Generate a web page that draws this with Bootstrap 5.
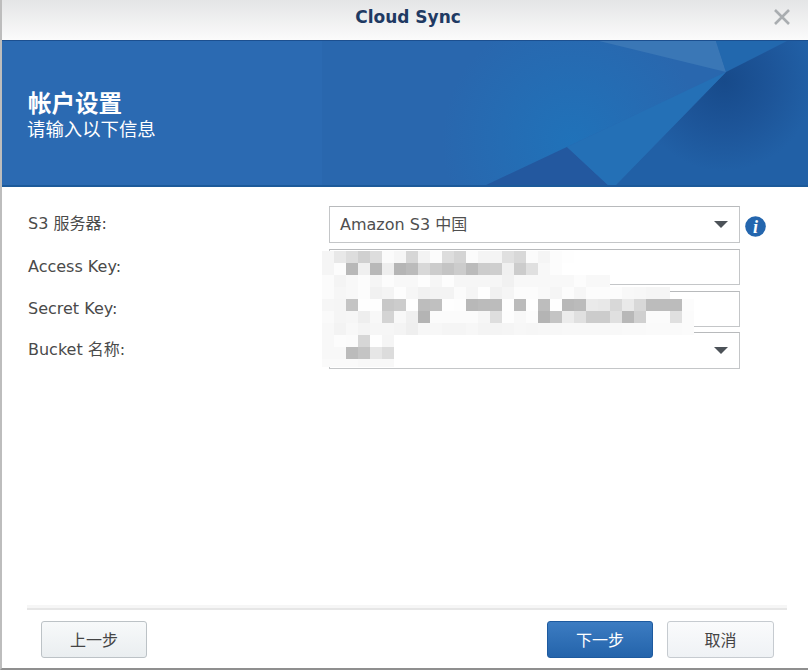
<!DOCTYPE html>
<html lang="zh-CN">
<head>
<meta charset="utf-8">
<title>Cloud Sync</title>
<link href="https://cdn.jsdelivr.net/npm/bootstrap@5.3.0/dist/css/bootstrap.min.css" rel="stylesheet">
<style>
html,body{height:100%;margin:0;background:#fff;overflow:hidden}
body{font-family:"Liberation Sans","Noto Sans CJK SC",sans-serif}
.wnd{width:808px;height:670px;border-left:2px solid #bdbdbd;border-bottom:2px solid #8f8f8f;display:flex;flex-direction:column;box-sizing:border-box;position:relative}
.ttl{height:40px;flex:none;background:linear-gradient(#e4e5e6,#fbfbfb);position:relative}
.ttl-text{font-family:"DejaVu Sans","Liberation Sans",sans-serif;font-weight:700;font-size:17px;color:#1f3a63;line-height:34px;text-align:center;padding-left:6px}
.cls{position:absolute;left:771px;top:9px}
.hero{height:147px;flex:none;position:relative;color:#fff;padding:50px 0 0 26px;background:#2b6ab2;border-top:1px solid #1c4f8f;overflow:hidden}
.hero svg{position:absolute;left:0;top:0}
.hero-in{position:relative}
.hero-a{font-family:"Liberation Sans","Noto Sans CJK SC",sans-serif;font-weight:700;font-size:23.5px;line-height:27px}
.hero-b{font-family:"Liberation Sans","Noto Sans CJK SC",sans-serif;font-size:18.4px;line-height:24px;margin-left:-1px}
.frm{flex:1;padding:19px 0 0 26px;color:#444}
.frow{display:flex;align-items:flex-start}
.frow-a{height:43px}
.frow-b{height:42px}
.frow-c{height:41px}
.lbl{width:301px;flex:none;font-family:"DejaVu Sans","Noto Sans CJK SC",sans-serif;font-size:16px;line-height:36px;color:#4a4a4a;white-space:nowrap}
.frow-b .lbl,.frow-c .lbl{line-height:35px}
.inp{width:411px;height:37px;flex:none;border:1px solid #c4c6c8;border-top-color:#b8babc;background:#fff;position:relative;font-family:"DejaVu Sans","Noto Sans CJK SC",sans-serif;font-size:16px;line-height:35px;padding-left:10px;color:#4f4f4f}
.frow-b .inp,.frow-c .inp{height:36px}
.car{position:absolute;right:11px;top:14px;width:0;height:0;border-left:7px solid transparent;border-right:7px solid transparent;border-top:7px solid #4c5258}
.inf{margin-left:5px;margin-top:10px}
.msk{position:absolute;left:320px;top:251px;filter:blur(.5px)}
.ftr{height:60px;flex:none;margin:0 21px 0 25px;border-top:2px solid #e6e6e6;box-shadow:0 -3px 0 #f6f6f6;display:flex;align-items:center;padding:0 13px 0 14px}
.bt{width:106px;height:37px;border-radius:3px;font-family:"Noto Sans CJK SC",sans-serif;font-size:16px;line-height:35px;text-align:center;padding:0;border:1px solid #bcc2c6;color:#444;background:linear-gradient(#f7f9fa,#eaeef0)}
.bt-p{color:#fff;border-color:#1d5a9f;background:linear-gradient(#3c7cc2,#2464ab);margin-right:14px}
.bt-c{width:107px;background:linear-gradient(#fafbfc,#eff2f5);border-color:#c6cbd0}
</style>
</head>
<body>
<div class="wnd">
  <div class="ttl">
    <div class="ttl-text">Cloud Sync</div>
    <svg class="cls" width="18" height="16" viewBox="0 0 18 16"><path d="M2 1 L16 15 M16 1 L2 15" stroke="#a9adb0" stroke-width="2.6" fill="none"/></svg>
  </div>
  <div class="hero">
    <svg width="806" height="146" viewBox="0 0 806 146">
      <defs>
        <radialGradient id="g2" gradientUnits="userSpaceOnUse" cx="570" cy="100" r="130"><stop offset="0" stop-color="#2072b9"/><stop offset="1" stop-color="#2967ae"/></radialGradient>
        <radialGradient id="g3" gradientUnits="userSpaceOnUse" cx="722" cy="40" r="90"><stop offset="0" stop-color="#174a8a"/><stop offset=".55" stop-color="#1d5599"/><stop offset="1" stop-color="#2160a6"/></radialGradient>
      </defs>
      <rect width="806" height="146" fill="#2b6ab2"/>
      <rect x="320" width="486" height="146" fill="#2967ae"/>
      <polygon points="597,0 724,31 480,146 430,146 430,0" fill="url(#g2)"/>
      <polygon points="597,0 714,0 724,31" fill="#3a77b6"/>
      <polygon points="714,0 785,0 724,31" fill="#2268ae"/>
      <polygon points="724,31 785,0 806,0 806,146 612,146" fill="url(#g3)"/>
      <polygon points="480,146 565,106 608,146" fill="#23589f"/>
      <polygon points="565,106 724,31 612,146 608,146" fill="#2470b6"/>
      <rect y="144" width="806" height="2" fill="#1c5a9a"/>
    </svg>
    <div class="hero-in">
      <div class="hero-a">帐户设置</div>
      <div class="hero-b">请输入以下信息</div>
    </div>
  </div>
  <div class="frm">
    <div class="frow frow-a"><div class="lbl">S3 服务器:</div><div class="inp">Amazon S3 中国<span class="car"></span></div>
      <svg class="inf" width="21" height="21" viewBox="0 0 21 21"><circle cx="10.5" cy="10.5" r="10.3" fill="#2466ae"/><text x="10.5" y="16.5" text-anchor="middle" fill="#fff" font-family="Liberation Serif,serif" font-style="italic" font-weight="700" font-size="18">i</text></svg>
    </div>
    <div class="frow frow-b"><div class="lbl">Access Key:</div><div class="inp"></div></div>
    <div class="frow frow-c"><div class="lbl">Secret Key:</div><div class="inp"></div></div>
    <div class="frow"><div class="lbl">Bucket 名称:</div><div class="inp"><span class="car"></span></div></div>
  </div>
  <div class="ftr">
    <button class="btn bt" type="button">上一步</button>
    <button class="btn bt bt-p ms-auto" type="button">下一步</button>
    <button class="btn bt bt-c" type="button">取消</button>
  </div>
  <svg class="msk" id="mosaic" width="374" height="118" aria-hidden="true"></svg>
</div>
<script>
var rows=[
"f5 e8 dd d0 dd fb f6 d6 f3 fc dd d4 fb f4 f4 e0 d8 fb f5 fc fe",
"f5 fc b8 f0 b8 ee b5 bb d8 cc c4 cc bb cc ce f0 cc e0 f8 fc",
"fb f4 f8 fc f5 fc f8 f8 fd f6 fd f6 f6 f6 f6 f1 f8 f8 f8 f8 f8 fc f8 f8",
"fb f6 f8 fc f1 f4 fd f6 f1 f3 f3 fb f5 fe f1 f5 fc fc f9 f5 fc f6 fc fc fc f8 f7 f5 f5",
"f6 f5 c4 fe fe c8 cc fe bd c0 fe fd b8 bb bc fe bb fe bd fe b8 bb ea e8 d8 e9 d8 bc bc bc fc",
"fa f5 f6 ee f8 d4 f8 f0 b4 fb fb fb fb f6 de fd f8 fc b4 c4 ec e0 cc cc e0 b8 d0 fb fb e0 fb",
"f8 f3 f8 f4 f6 f6 f4 ef f7 f7 f5 f5 f7 f4 f4 f5 f7 f6 f7 f7 f8 f8 f8 f8 f8 f9 f9 fa fa fa fb",
"f8 fc fb d6 fe f5",
"f8 f8 bb c4 e6 dc",
"fa fa fa f8 f8 f8"
];
var s=document.getElementById("mosaic"),ns="http://www.w3.org/2000/svg";
rows.forEach(function(r,y){r.split(" ").forEach(function(c,x){
  var e=document.createElementNS(ns,"rect");
  e.setAttribute("x",x*12);e.setAttribute("y",y*12);
  e.setAttribute("width",12);e.setAttribute("height",y==9?8:12);
  e.setAttribute("fill","#"+c+c+c);s.appendChild(e);
});});
</script>
</body>
</html>
